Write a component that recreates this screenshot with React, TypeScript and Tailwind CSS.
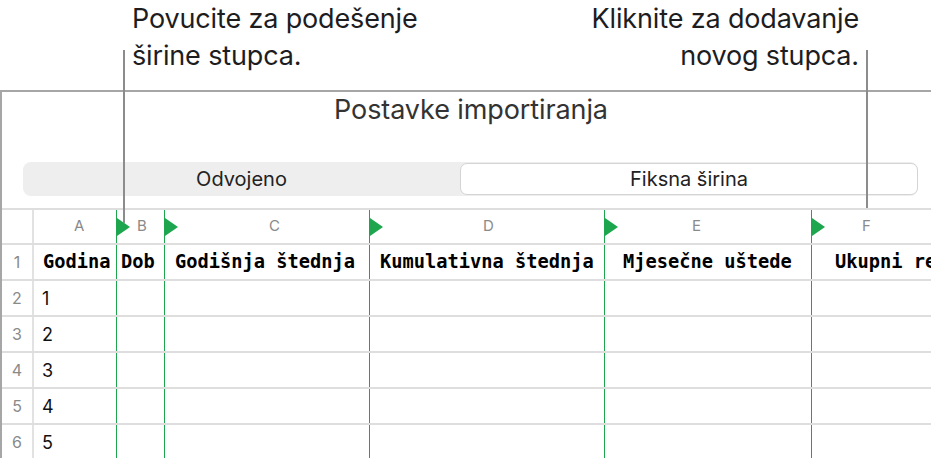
import React from "react";

const rows = ["1", "2", "3", "4", "5"];

function Tri() {
  return (
    <svg width="13" height="18" viewBox="0 0 13 18" className="absolute left-0 top-[8px]">
      <polygon points="0,0 13,9 0,18" fill="#1ea64e" />
    </svg>
  );
}

export default function App() {
  return (
    <div className="relative w-[931px] h-[458px] overflow-hidden bg-white font-['Inter',sans-serif] text-[#1d1d1f]">
      {/* callouts */}
      <div className="flex h-[90px] justify-between">
        <div className="ml-[132px] text-[27px] leading-[37px] tracking-[-0.15px]">
          Povucite za podešenje
          <br />
          širine stupca.
        </div>
        <div className="mr-[72px] text-right text-[27px] leading-[37px] tracking-[-0.15px]">
          Kliknite za dodavanje
          <br />
          novog stupca.
        </div>
      </div>

      {/* window */}
      <div className="border-l-2 border-t-2 border-[#a6a6a6]">
        <div className="mt-[2px] ml-[9px] flex h-[32px] items-center justify-center text-[27px] leading-[32px] text-[#333] tracking-[-0.1px]">
          Postavke importiranja
        </div>
        <div className="mt-[36px] ml-[21px] mr-[13px] flex h-[34px] rounded-[8px] bg-[#eeeeee]">
          <div className="flex flex-1 items-center justify-center text-[20px] text-[#222]">Odvojeno</div>
          <div className="my-[1px] flex w-[458px] items-center justify-center rounded-[7px] border border-[#d4d4d4] bg-white text-[20px] text-[#222]">
            Fiksna širina
          </div>
        </div>

        {/* table */}
        <div className="mt-[12px] border-t-2 border-[#dedede]">
          {/* header */}
          <div className="flex h-[35px] border-b-2 border-[#dedede] text-[15px] text-[#8a8a8a]">
            <div className="w-[32px] border-r-2 border-[#e2e2e2]" />
            <div className="flex w-[82px] items-center pl-[40px]">A</div>
            <div className="relative flex w-[48px] items-center border-l border-[#1ea64e] pl-[20px]">
              <Tri />B
            </div>
            <div className="relative flex w-[205px] items-center border-l border-[#1ea64e] pl-[104px]">
              <Tri />C
            </div>
            <div className="relative flex w-[235px] items-center border-l border-[#1ea64e] pl-[113px]">
              <Tri />D
            </div>
            <div className="relative flex w-[207px] items-center border-l border-[#1ea64e] pl-[87px]">
              <Tri />E
            </div>
            <div className="relative flex flex-1 items-center border-l border-[#1ea64e] pl-[50px]">
              <Tri />F
            </div>
          </div>
          {/* row 1 */}
          <div className="flex h-[36px] border-b-2 border-[#dedede] font-['DejaVu_Sans_Mono',monospace] text-[18.7px] font-bold text-black whitespace-nowrap">
            <div className="flex w-[32px] items-center justify-center border-r-2 border-[#e2e2e2] font-['Inter',sans-serif] text-[16px] font-normal text-[#8a8a8a]">
              1
            </div>
            <div className="flex w-[82px] items-center pl-[9px]">Godina</div>
            <div className="flex w-[48px] items-center border-l border-[#1ea64e] pl-[4px]">Dob</div>
            <div className="flex w-[205px] items-center border-l border-[#1ea64e] pl-[10px]">Godišnja štednja</div>
            <div className="flex w-[235px] items-center border-l border-[#1ea64e] pl-[10px]">Kumulativna štednja</div>
            <div className="flex w-[207px] items-center border-l border-[#1ea64e] pl-[18px]">Mjesečne uštede</div>
            <div className="flex min-w-0 flex-1 items-center overflow-hidden border-l border-[#1ea64e] pl-[23px]">Ukupni re</div>
          </div>
          {rows.map((r, i) => (
            <div key={r} className="flex h-[36px] border-b-2 border-[#dedede]">
              <div className="flex w-[32px] items-center justify-center border-r-2 border-[#e2e2e2] text-[16px] text-[#8a8a8a]">
                {i + 2}
              </div>
              <div className="flex w-[82px] items-center pl-[8px] text-[18px] text-[#111]">{r}</div>
              <div className="w-[48px] border-l border-[#1ea64e]" />
              <div className="w-[205px] border-l border-[#1ea64e]" />
              <div className="w-[235px] border-l border-[#1ea64e]" />
              <div className="w-[207px] border-l border-[#1ea64e]" />
              <div className="flex-1 border-l border-[#1ea64e]" />
            </div>
          ))}
        </div>
      </div>

      {/* callout lines */}
      <div className="absolute left-[123px] top-[50px] h-[173px] w-[2px] bg-[#8c8c8c]" />
      <div className="absolute left-[866px] top-[50px] h-[158px] w-[2px] bg-[#8c8c8c]" />
    </div>
  );
}
